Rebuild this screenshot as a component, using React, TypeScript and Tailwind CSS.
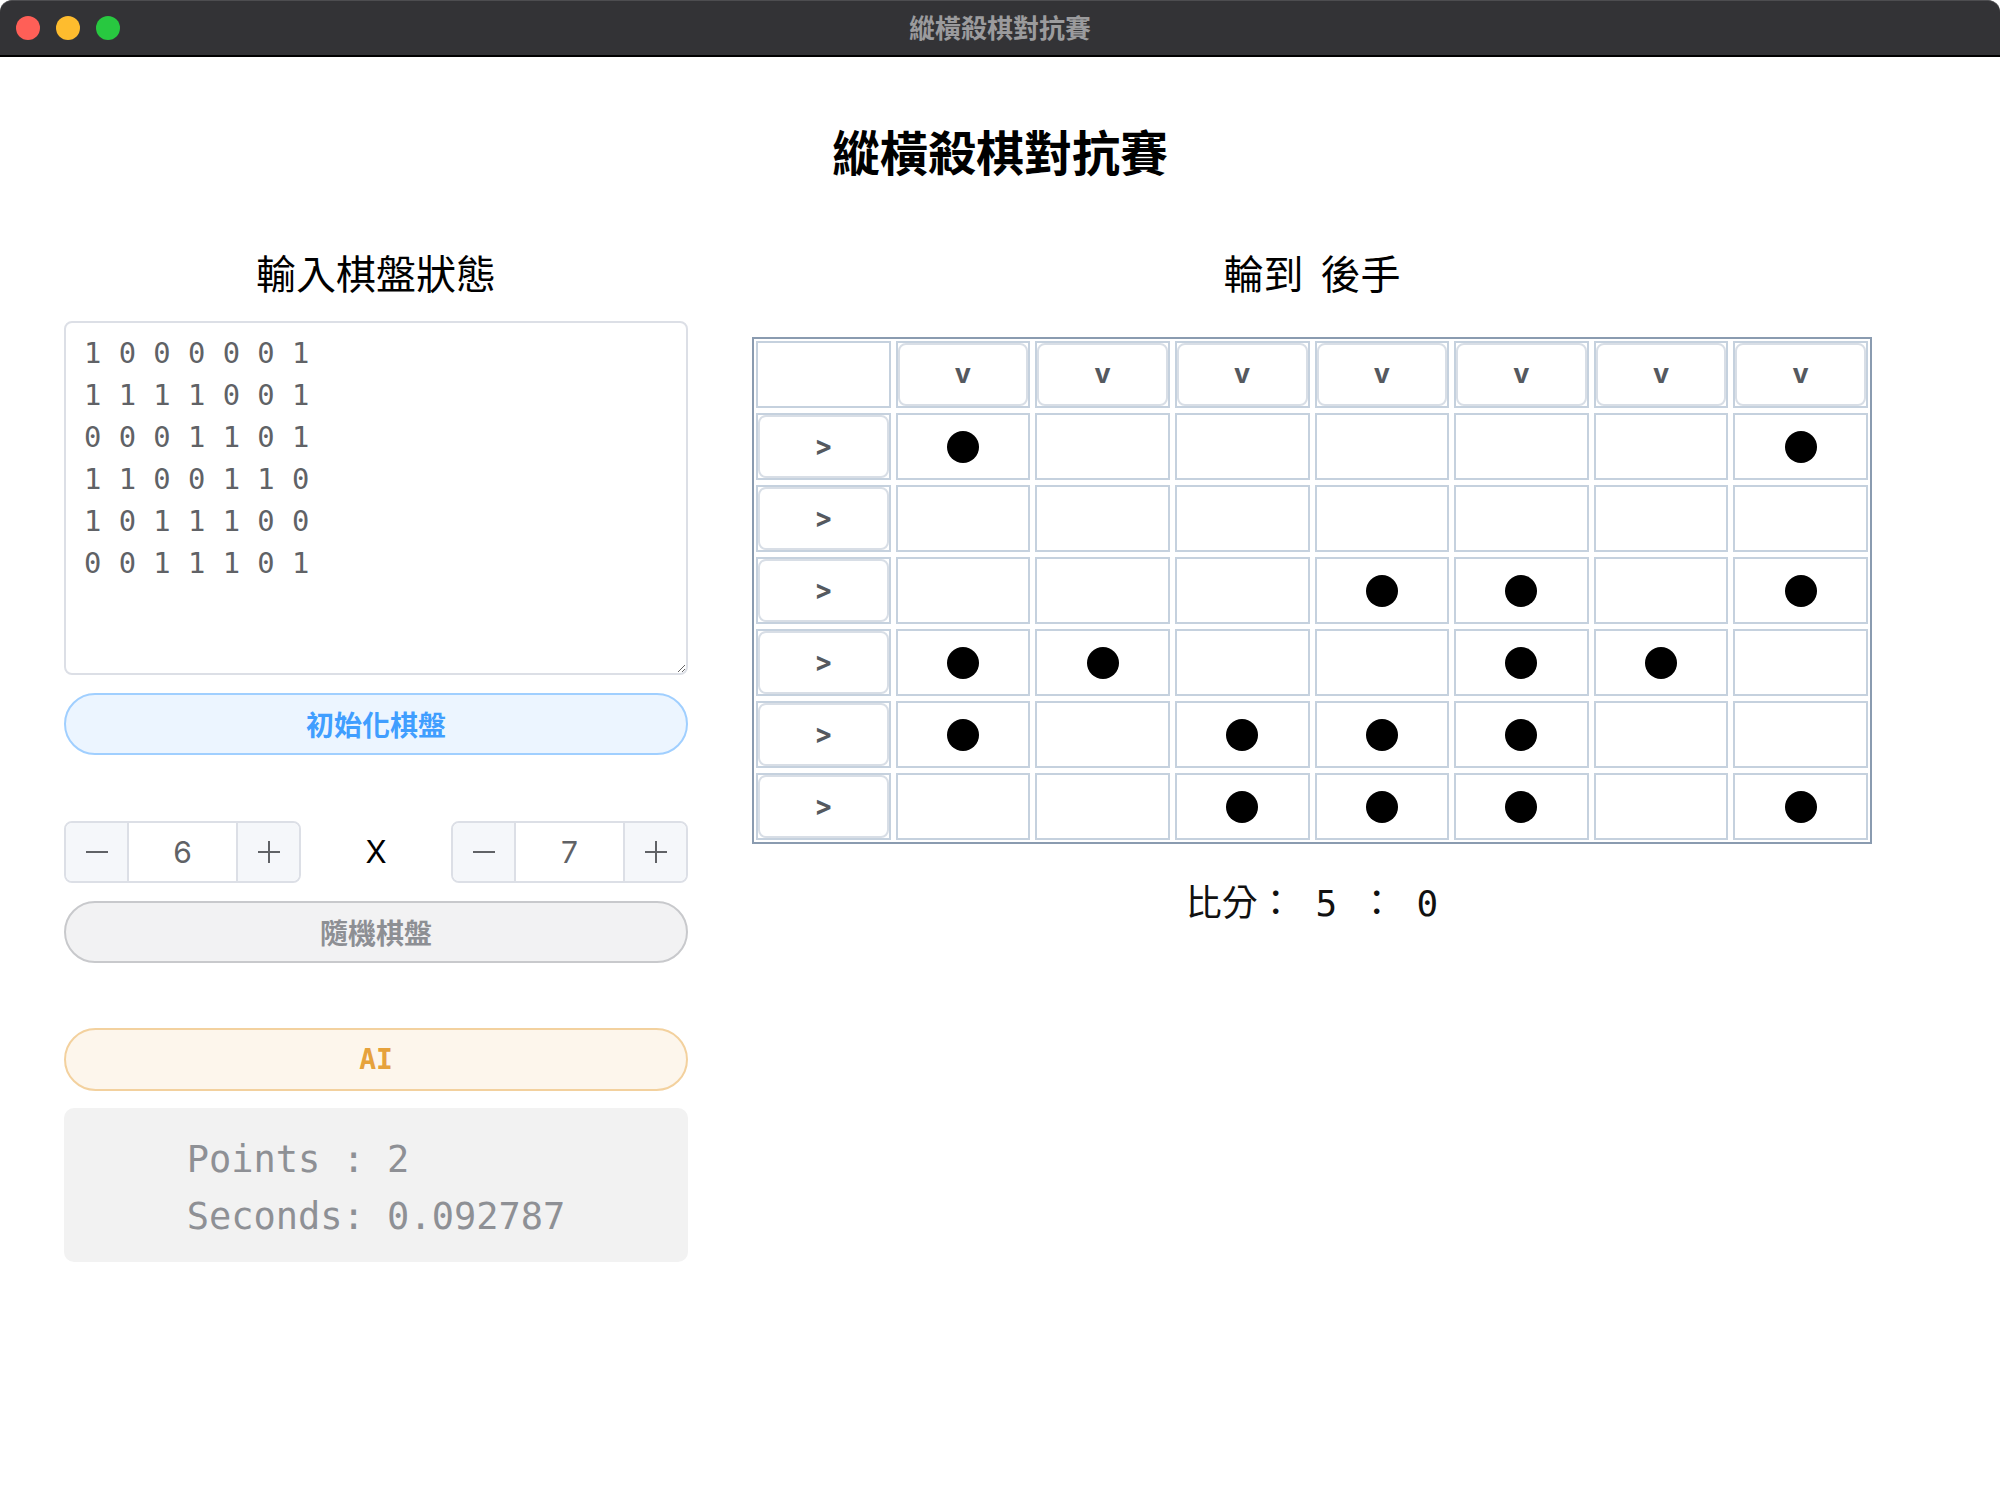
import React from 'react';

const BOARD = [
  [1, 0, 0, 0, 0, 0, 1],
  [0, 0, 0, 0, 0, 0, 0],
  [0, 0, 0, 1, 1, 0, 1],
  [1, 1, 0, 0, 1, 1, 0],
  [1, 0, 1, 1, 1, 0, 0],
  [0, 0, 1, 1, 1, 0, 1],
];

const INPUT_TEXT = `1 0 0 0 0 0 1
1 1 1 1 0 0 1
0 0 0 1 1 0 1
1 1 0 0 1 1 0
1 0 1 1 1 0 0
0 0 1 1 1 0 1`;

const TitleBar = () => (
  <div className="relative flex h-[55px] items-center gap-[16px] rounded-t-[12px] border-t border-[#4d4d50] bg-[#333336] pl-[16px]">
    <span className="h-[24px] w-[24px] rounded-full bg-[#ff5f57]" />
    <span className="h-[24px] w-[24px] rounded-full bg-[#febc2e]" />
    <span className="h-[24px] w-[24px] rounded-full bg-[#28c840]" />
    <div className="absolute inset-0 flex items-center justify-center pb-[4px] text-[26px] font-semibold text-[#9b9b9d]">
      縱橫殺棋對抗賽
    </div>
  </div>
);

const Stepper = ({ value }: { value: number }) => (
  <div className="flex h-[62px] w-[237px] overflow-hidden rounded-[8px] border-2 border-[#dcdfe6]">
    <button className="flex w-[63px] items-center justify-center border-r-2 border-[#dcdfe6] bg-[#f5f7fa]">
      <svg width="22" height="22" viewBox="0 0 22 22">
        <line x1="0" y1="11" x2="22" y2="11" stroke="#606266" strokeWidth="2" />
      </svg>
    </button>
    <div className="flex flex-1 items-center justify-center bg-white font-['Inter',sans-serif] text-[30px] text-[#606266]">
      {value}
    </div>
    <button className="flex w-[63px] items-center justify-center border-l-2 border-[#dcdfe6] bg-[#f5f7fa]">
      <svg width="22" height="22" viewBox="0 0 22 22">
        <line x1="0" y1="11" x2="22" y2="11" stroke="#606266" strokeWidth="2" />
        <line x1="11" y1="0" x2="11" y2="22" stroke="#606266" strokeWidth="2" />
      </svg>
    </button>
  </div>
);

const HeadButton = ({ label }: { label: string }) => (
  <button className="flex h-full w-full items-center justify-center rounded-[8px] border-2 border-[#d8dee6] bg-white font-['Inter',sans-serif] text-[27px] font-bold text-[#55595f]">
    {label}
  </button>
);

const Board = () => (
  <div className="grid w-[1120px] grid-cols-8 gap-[5px] border-2 border-[#8a9bb0] p-[2px]">
    <div className="h-[67px] border-2 border-[#c5d1de]" />
    {BOARD[0].map((_, c) => (
      <div key={'h' + c} className="h-[67px] border-2 border-[#c5d1de]">
        <HeadButton label="v" />
      </div>
    ))}
    {BOARD.map((row, r) => (
      <React.Fragment key={r}>
        <div className="h-[67px] border-2 border-[#c5d1de]">
          <HeadButton label=">" />
        </div>
        {row.map((v, c) => (
          <div key={c} className="flex h-[67px] items-center justify-center border-2 border-[#c5d1de]">
            {v === 1 && <div className="h-[32px] w-[32px] rounded-full bg-black" />}
          </div>
        ))}
      </React.Fragment>
    ))}
  </div>
);

export default function App() {
  return (
    <div className="h-[1496px] w-[2000px] overflow-hidden bg-white font-['Noto_Sans_CJK_TC',sans-serif] text-black">
      <TitleBar />
      <div className="h-[2px] bg-black" />
      <h1 className="mt-[65px] text-center text-[48px] font-bold leading-[56px]">縱橫殺棋對抗賽</h1>

      <div className="mt-[70px] flex gap-[64px] pl-[64px]">
        {/* left column */}
        <div className="flex w-[624px] flex-col">
          <h2 className="text-center text-[40px] leading-[48px]">輸入棋盤狀態</h2>
          <textarea
            defaultValue={INPUT_TEXT}
            spellCheck={false}
            className="mt-[25px] h-[354px] w-full rounded-[8px] border-2 border-[#dcdfe6] px-[18px] py-[9px] font-['DejaVu_Sans_Mono',monospace] text-[28.8px] leading-[42px] text-[#606266] outline-none"
          />
          <button className="mt-[18px] h-[62px] w-full rounded-full border-2 border-[#a0cfff] bg-[#ecf5ff] text-[28px] font-semibold text-[#409eff]">
            初始化棋盤
          </button>

          <div className="mt-[66px] flex items-center justify-between">
            <Stepper value={6} />
            <span className="font-['Inter',sans-serif] text-[31px] text-black">X</span>
            <Stepper value={7} />
          </div>

          <button className="mt-[18px] h-[62px] w-full rounded-full border-2 border-[#c8c9cc] bg-[#f2f2f3] text-[28px] font-semibold text-[#8d8f94]">
            隨機棋盤
          </button>

          <button className="mt-[65px] h-[63px] w-full rounded-full border-2 border-[#f3d19e] bg-[#fdf6ec] font-['DejaVu_Sans_Mono',monospace] text-[28px] font-bold text-[#e6a23c]">
            AI
          </button>

          <div className="mt-[17px] flex h-[154px] justify-center rounded-[10px] bg-[#f2f2f2] pt-[23px]">
            <div className="whitespace-pre font-['DejaVu_Sans_Mono',monospace] text-[37px] leading-[57px] text-[#8e9095]">
              {'Points : 2\nSeconds: 0.092787'}
            </div>
          </div>
        </div>

        {/* right column */}
        <div className="flex w-[1120px] flex-col items-center">
          <h2 className="text-center text-[40px] leading-[48px] [word-spacing:8px]">輪到 後手</h2>
          <div className="mt-[41px]">
            <Board />
          </div>
          <div className="mt-[38px] whitespace-pre font-['DejaVu_Sans_Mono','Noto_Sans_CJK_TC',monospace] text-[36px] leading-[44px] text-[#111]">
            {'比分： 5 ： 0'}
          </div>
        </div>
      </div>
    </div>
  );
}
